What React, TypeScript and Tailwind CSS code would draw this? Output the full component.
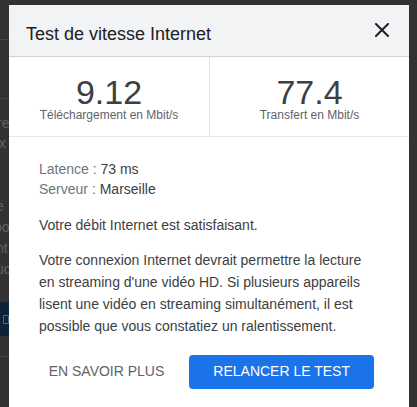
import React from "react";

const font = { fontFamily: "'Liberation Sans', Arial, Helvetica, sans-serif" };

function BackgroundStrip() {
  return (
    <div className="w-[9px] shrink-0 overflow-hidden flex flex-col text-[14px] leading-[20px] text-[#626262]">
      <div className="h-[40px] border-b border-[#444]" />
      <div className="h-[59px] border-b border-[#444]" />
      <div className="h-[14px]" />
      <div className="whitespace-nowrap -ml-[3px]">re</div>
      <div className="whitespace-nowrap -ml-[1px]">x</div>
      <div className="h-[43px]" />
      <div className="whitespace-nowrap -ml-[4px] leading-[21px]">e</div>
      <div className="whitespace-nowrap -ml-[6px] leading-[21px]">oo</div>
      <div className="whitespace-nowrap -ml-[4px] leading-[21px]">nt</div>
      <div className="whitespace-nowrap -ml-[4px] leading-[21px]">uc</div>
      <div className="h-[22px]" />
      <div className="h-[34px] bg-[#0e2238] flex items-center">
        <div className="w-[6px] h-[9px] border border-[#5a6a80] ml-[3px] rounded-[1px]" />
      </div>
      <div className="h-[21px] border-b border-[#444]" />
    </div>
  );
}

export default function App() {
  return (
    <div className="w-[417px] h-[407px] overflow-hidden bg-[#323232] flex" style={font}>
      <BackgroundStrip />
      <div className="w-[400px] shrink-0 mt-[5px] bg-white flex flex-col">
        <div className="h-[57px] bg-[#f1f3f4] border-b border-[#d2d2d2] flex items-center justify-between pl-[17px] pr-[20px]">
          <div className="text-[18px] leading-[22px] text-[#202124] mt-[8px]">Test de vitesse Internet</div>
          <svg width="14" height="14" viewBox="0 0 14 14" className="-mt-[1px]">
            <path d="M1 1 L13 13 M13 1 L1 13" stroke="#202124" strokeWidth="2" strokeLinecap="square" />
          </svg>
        </div>
        <div className="grid grid-cols-2 border-b border-[#e8e8e8]">
          <div className="flex flex-col items-center pt-[18px] pb-[15px]">
            <div className="text-[34px] leading-[34px] text-[#3c4043]">9.12</div>
            <div className="text-[12px] leading-[12px] text-[#5f6368]">Téléchargement en Mbit/s</div>
          </div>
          <div className="flex flex-col items-center pt-[18px] pb-[15px] border-l border-[#e0e0e0]">
            <div className="text-[34px] leading-[34px] text-[#3c4043]">77.4</div>
            <div className="text-[12px] leading-[12px] text-[#5f6368]">Transfert en Mbit/s</div>
          </div>
        </div>
        <div className="pl-[30px] pr-[36px] pt-[22px] pb-[20px] text-[14px] text-[#3c4043]">
          <div className="leading-[20px]">
            <span className="text-[#70757a]">Latence : </span>73 ms
          </div>
          <div className="leading-[20px]">
            <span className="text-[#70757a]">Serveur : </span>Marseille
          </div>
          <p className="leading-[22px] mt-[15px]">Votre débit Internet est satisfaisant.</p>
          <p className="leading-[22px] mt-[13px]">
            Votre connexion Internet devrait permettre la lecture en streaming d'une vidéo HD. Si plusieurs appareils
            lisent une vidéo en streaming simultanément, il est possible que vous constatiez un ralentissement.
          </p>
        </div>
        <div className="flex justify-end items-center gap-[9px] pr-[35px] -mt-[2px]">
          <button className="h-[34px] px-[16px] text-[14px] text-[#5f6368] uppercase">En savoir plus</button>
          <button className="h-[34px] px-[24px] text-[14px] text-white bg-[#1a73e8] rounded-[4px] uppercase">
            Relancer le test
          </button>
        </div>
        <div className="h-[20px]" />
      </div>
    </div>
  );
}
